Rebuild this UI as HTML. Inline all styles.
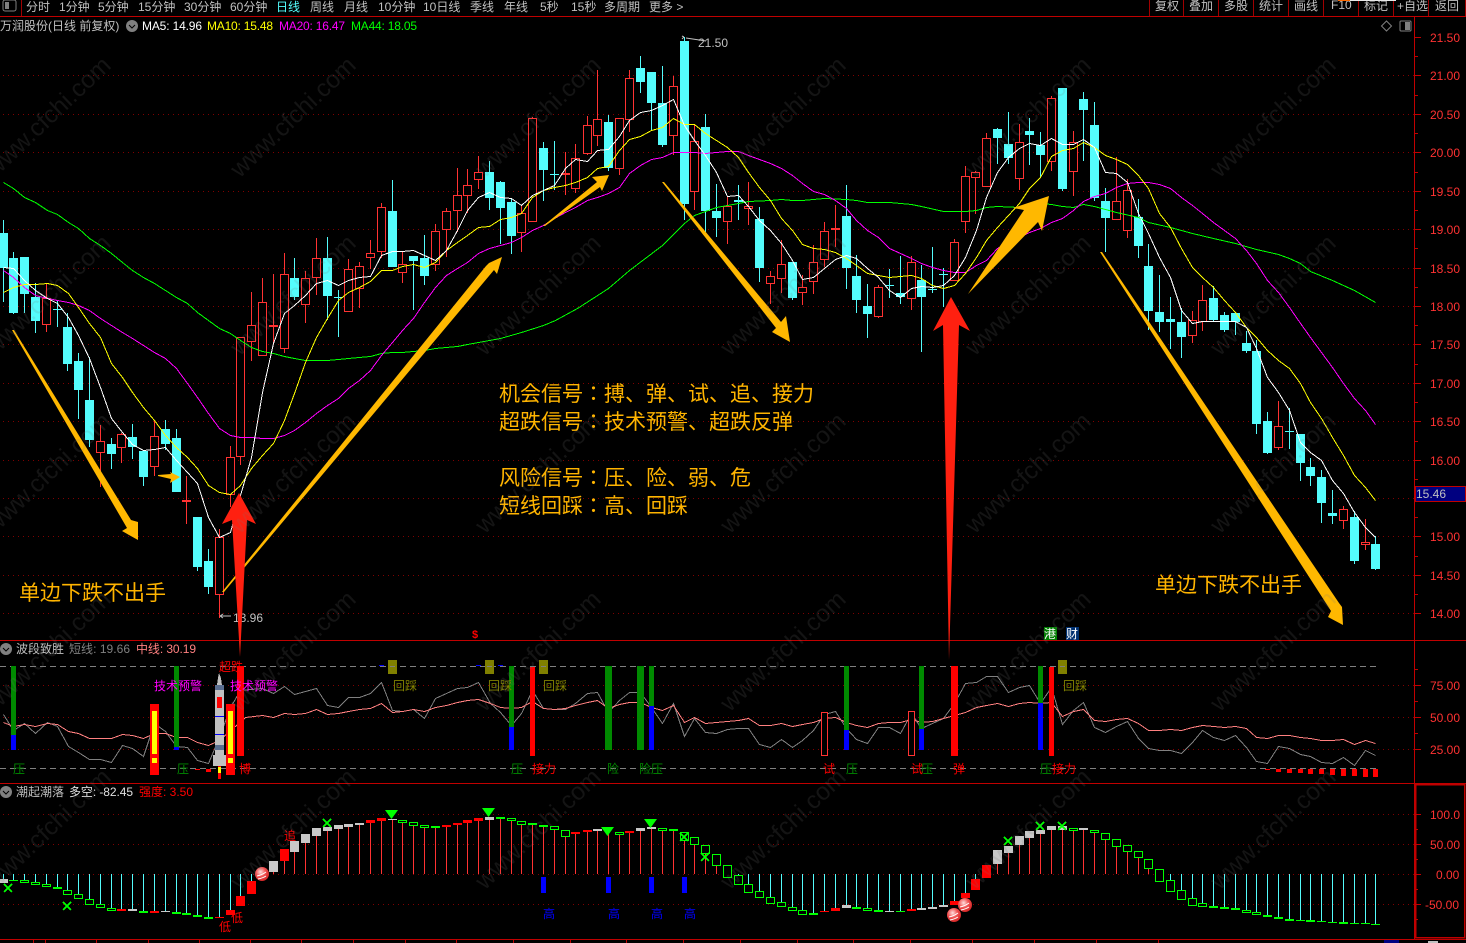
<!DOCTYPE html>
<html lang="zh">
<head>
<meta charset="utf-8">
<title>万润股份</title>
<style>
html,body{margin:0;padding:0;background:#000;width:1466px;height:943px;overflow:hidden}
svg{display:block}
text{font-family:"Liberation Sans","WenQuanYi Zen Hei","Noto Sans CJK SC",sans-serif;font-size:12px;white-space:pre}
.c{shape-rendering:crispEdges}
.big{font-size:21px;fill:#ffb400;font-family:"Liberation Sans","Noto Sans CJK JP",sans-serif}
.w{font-size:24.5px;fill:rgba(120,120,120,.17);text-anchor:middle}
.ax{fill:#ff3232}
</style>
</head>
<body>
<svg xmlns="http://www.w3.org/2000/svg" width="1466" height="943" viewBox="0 0 1466 943">
<rect width="1466" height="943" fill="#000"/>

<!-- toolbar -->
<g fill="#c0c0c0">
<rect x="3" y="0" width="13" height="11" rx="2" fill="none" stroke="#808080"/><rect x="5" y="2" width="4" height="7" fill="#808080"/>
<text x="26" y="11">分时</text><text x="59" y="11">1分钟</text><text x="98" y="11">5分钟</text><text x="138" y="11">15分钟</text><text x="184" y="11">30分钟</text><text x="230" y="11">60分钟</text><text x="276" y="11" fill="#54fcfc">日线</text><text x="310" y="11">周线</text><text x="344" y="11">月线</text><text x="378" y="11">10分钟</text><text x="423" y="11">10日线</text><text x="470" y="11">季线</text><text x="504" y="11">年线</text><text x="540" y="11">5秒</text><text x="571" y="11">15秒</text><text x="604" y="11">多周期</text><text x="649" y="11">更多 &gt;</text>
<text x="1155" y="10">复权</text><text x="1189" y="10">叠加</text><text x="1224" y="10">多股</text><text x="1259" y="10">统计</text><text x="1294" y="10">画线</text><text x="1331" y="9">F10</text><text x="1364" y="10">标记</text><text x="1397" y="10">+自选</text><text x="1435" y="10">返回</text>
</g>
<path class="c" d="M21.5 0V16M1149.5 0V16M1183.5 0V16M1218.5 0V16M1253.5 0V16M1288.5 0V16M1323.5 0V16M1358.5 0V16M1393.5 0V16M1428.5 0V16M1465.5 0V16" stroke="#a00000" fill="none"/>
<path class="c" d="M1338 .5h12" stroke="#ff6a00"/><path class="c" d="M1350 .5h46" stroke="#e8e8e8"/>

<!-- grid -->
<path class="c" d="M3 75.5H1414M3 114.5H1414M3 152.5H1414M3 191.5H1414M3 229.5H1414M3 268.5H1414M3 306.5H1414M3 344.5H1414M3 383.5H1414M3 421.5H1414M3 460.5H1414M3 498.5H1414M3 536.5H1414M3 575.5H1414M3 613.5H1414M3 685.5H1414M3 717.5H1414M3 749.5H1414M3 814.5H1414M3 844.5H1414M3 874.5H1414M3 904.5H1414" stroke="#800000" stroke-dasharray="1 4" fill="none"/>
<path class="c" d="M0 666.5H1378M0 768.5H1378" stroke="#808080" stroke-dasharray="6 4" fill="none"/>

<!-- frame lines -->
<path class="c" d="M0 16.5H1466M0 640.5H1466M0 783.5H1466M0 939.5H1466" stroke="#c00000" fill="none"/>
<path class="c" d="M1414.5 17V939" stroke="#c00000" fill="none"/>
<rect class="c" x="1415.5" y="784.5" width="49" height="153" fill="none" stroke="#c00000" stroke-width="1.5"/>
<path class="c" d="M1414 37.5h7M1414 75.5h7M1414 114.5h7M1414 152.5h7M1414 191.5h7M1414 229.5h7M1414 268.5h7M1414 306.5h7M1414 344.5h7M1414 383.5h7M1414 421.5h7M1414 460.5h7M1414 498.5h7M1414 536.5h7M1414 575.5h7M1414 613.5h7M1414 56.5h4M1414 95.5h4M1414 133.5h4M1414 172.5h4M1414 210.5h4M1414 248.5h4M1414 287.5h4M1414 325.5h4M1414 364.5h4M1414 402.5h4M1414 441.5h4M1414 479.5h4M1414 517.5h4M1414 556.5h4M1414 594.5h4M1414 685.5h7M1414 717.5h7M1414 749.5h7M1414 701.5h4M1414 733.5h4M1414 669.5h4M1414 814.5h7M1414 844.5h7M1414 874.5h7M1414 904.5h7M1414 829.5h4M1414 859.5h4M1414 889.5h4M1414 919.5h4" stroke="#c00000" fill="none"/>
<path class="c" d="M33.5 940v3M45.5 940v3M96.5 940v3M148.5 940v3M199.5 940v3M250.5 940v3M301.5 940v3M353.5 940v3M405.5 940v3M456.5 940v3M513.5 940v3M570.5 940v3M626.5 940v3M683.5 940v3M740.5 940v3M797.5 940v3M853.5 940v3M910.5 940v3M972.5 940v3M1034.5 940v3M1096.5 940v3M1158.5 940v3" stroke="#c00000" fill="none"/>
<rect x="1384" y="940" width="15" height="3" fill="#000080"/><rect x="1428" y="941" width="10" height="2" fill="#c0c0c0"/>

<!-- axis labels -->
<g class="ax">
<text x="1430" y="42">21.50</text><text x="1430" y="80">21.00</text><text x="1430" y="119">20.50</text><text x="1430" y="157">20.00</text><text x="1430" y="196">19.50</text><text x="1430" y="234">19.00</text><text x="1430" y="273">18.50</text><text x="1430" y="311">18.00</text><text x="1430" y="349">17.50</text><text x="1430" y="388">17.00</text><text x="1430" y="426">16.50</text><text x="1430" y="465">16.00</text><text x="1430" y="541">15.00</text><text x="1430" y="580">14.50</text><text x="1430" y="618">14.00</text>
<text x="1430" y="690">75.00</text><text x="1430" y="722">50.00</text><text x="1430" y="754">25.00</text>
<text x="1430" y="819">100.0</text><text x="1430" y="849">50.00</text><text x="1436" y="879">0.00</text><text x="1425" y="909">-50.00</text>
</g>
<rect class="c" x="1415.5" y="486.5" width="50" height="15" fill="#000080" stroke="#c00000"/>
<text x="1416" y="498" fill="#c0c0c0">15.46</text>

<!-- title -->
<text x="0" y="30" fill="#c0c0c0">万润股份(日线 前复权)</text>
<circle cx="132" cy="26" r="6" fill="#808080"/><path d="M129 25l3 3 3-3" stroke="#000" fill="none"/>
<text x="142" y="30" fill="#fff" textLength="60">MA5: 14.96</text>
<text x="207" y="30" fill="#ffff00" textLength="66">MA10: 15.48</text>
<text x="279" y="30" fill="#ff00ff" textLength="66">MA20: 16.47</text>
<text x="351" y="30" fill="#00ff00" textLength="66">MA44: 18.05</text>
<path d="M1386.5 21l5 5-5 5-5-5z" fill="none" stroke="#808080"/>
<rect x="1400" y="21" width="11" height="10" rx="1" fill="none" stroke="#808080"/><rect x="1405" y="22" width="5" height="8" fill="#808080"/>

<!-- candle wicks -->
<path class="c" fill="none" stroke="#54fcfc" d="M3.5 220V302M13.5 252V314M24.5 257V313M35.5 283V333M57.5 300V327M67.5 313V371M78.5 353V419M89.5 357V447M111.5 438V469M132.5 424V459M143.5 451V486M165.5 420V450M176.5 429V492M197.5 517V571M208.5 549V594M294.5 258V300M327.5 237V320M338.5 290V337M392.5 180V267M413.5 256V310M424.5 235V285M489.5 161V210M500.5 181V244M511.5 198V254M543.5 142V201M554.5 141V190M608.5 115V171M640.5 56V93M651.5 72V130M662.5 66V147M684.5 37V220M705.5 114V232M716.5 184V237M738.5 185V220M759.5 207V282M792.5 262V300M846.5 185V289M856.5 255V313M867.5 284V338M889.5 269V298M900.5 256V304M921.5 265V352M932.5 247V293M943.5 268V307M997.5 128V164M1008.5 112V164M1029.5 118V165M1040.5 132V177M1062.5 88V191M1083.5 92V161M1094.5 102V201M1105.5 188V252M1138.5 199V258M1148.5 244V330M1159.5 275V332M1170.5 297V349M1181.5 308V358M1213.5 286V322M1224.5 312V332M1235.5 313V335M1246.5 331V353M1256.5 340V434M1267.5 412V454M1289.5 408V449M1300.5 434V481M1310.5 458V486M1321.5 470V523M1332.5 490V524M1354.5 511V564M1375.5 536V570"/>
<path class="c" fill="none" stroke="#ff3232" d="M46.5 283V332M100.5 425V487M121.5 433V463M154.5 421V476M186.5 476V524M219.5 529V618M230.5 446V507M240.5 337V465M251.5 292V361M262.5 278V356M273.5 274V343M284.5 253V353M305.5 271V323M316.5 238V295M348.5 259V312M359.5 262V308M370.5 240V269M381.5 203V258M402.5 252V283M435.5 224V271M446.5 208V257M457.5 168V232M467.5 169V213M478.5 156V189M521.5 205V252M532.5 117V222M565.5 152V195M575.5 144V193M587.5 116V155M597.5 70V146M619.5 118V175M629.5 70V132M673.5 76V155M694.5 125V210M727.5 197V244M748.5 182V225M770.5 271V304M781.5 240V293M802.5 275V305M813.5 245V294M824.5 222V267M835.5 205V247M878.5 285V318M911.5 256V310M954.5 239V281M965.5 166V233M975.5 171V214M986.5 133V187M1019.5 124V190M1051.5 96V171M1073.5 131V196M1116.5 157V220M1127.5 179V238M1192.5 311V343M1202.5 285V331M1278.5 401V450M1343.5 506V529M1365.5 519V550"/>
<!-- cyan bodies -->
<path class="c" fill="#54fcfc" d="M-1 233h9V268h-9zM9 258h9V313h-9zM20 257h9V294h-9zM31 297h9V321h-9zM53 309h9v1h-9zM63 327h9V364h-9zM74 361h9V390h-9zM85 400h9V440h-9zM107 444h9V454h-9zM128 437h9V447h-9zM139 451h9V477h-9zM161 429h9V444h-9zM172 438h9V492h-9zM193 517h9V567h-9zM204 561h9V587h-9zM290 278h9V297h-9zM323 258h9V296h-9zM334 297h9v1h-9zM388 211h9V267h-9zM409 256h9V261h-9zM420 258h9V276h-9zM485 172h9V198h-9zM496 182h9V208h-9zM507 202h9V236h-9zM539 148h9V170h-9zM550 174h9v1h-9zM604 122h9V168h-9zM636 68h9V82h-9zM647 72h9V103h-9zM658 103h9V145h-9zM680 41h9V204h-9zM701 127h9V211h-9zM712 211h9V218h-9zM734 200h9v2h-9zM755 219h9V268h-9zM788 262h9V298h-9zM842 216h9V268h-9zM852 276h9V300h-9zM863 306h9V314h-9zM885 285h9v1h-9zM896 293h9V297h-9zM917 280h9V297h-9zM928 289h9v1h-9zM939 274h9v1h-9zM993 129h9V138h-9zM1004 144h9V158h-9zM1025 131h9V135h-9zM1036 145h9V155h-9zM1058 88h9V189h-9zM1079 99h9V110h-9zM1090 125h9V198h-9zM1101 201h9V218h-9zM1134 217h9V246h-9zM1144 266h9V311h-9zM1155 312h9V322h-9zM1166 319h9V322h-9zM1177 322h9V337h-9zM1209 298h9V320h-9zM1220 315h9V330h-9zM1231 313h9V322h-9zM1242 343h9V351h-9zM1252 351h9V424h-9zM1263 421h9V453h-9zM1285 431h9v1h-9zM1296 434h9V463h-9zM1306 467h9V476h-9zM1317 477h9V503h-9zM1328 513h9V516h-9zM1350 517h9V561h-9zM1371 544h9V569h-9z"/>
<!-- red bodies -->
<path class="c" fill="#000" stroke="#ff3232" d="M42.5 298.5h8V324.500h-8zM96.500 441.500h8V452.500h-8zM117.500 434.500h8V447.500h-8zM150.500 436.500h8V466.500h-8zM215.500 537.500h8V594.500h-8zM226.500 457.500h8V494.500h-8zM236.500 337.500h8V456.500h-8zM247.500 325.500h8V341.500h-8zM258.500 302.500h8V355.500h-8zM280.500 274.500h8V348.500h-8zM301.500 278.500h8V304.500h-8zM312.500 258.500h8V277.500h-8zM344.500 269.500h8V311.500h-8zM355.500 266.500h8V288.500h-8zM366.500 253.500h8V257.500h-8zM377.500 207.500h8V251.500h-8zM398.500 264.500h8V272.500h-8zM431.500 231.500h8V264.500h-8zM442.500 211.500h8V229.500h-8zM453.500 195.500h8V210.500h-8zM463.500 185.500h8V195.500h-8zM474.500 172.500h8V179.500h-8zM517.500 213.500h8V232.500h-8zM528.500 118.500h8V221.500h-8zM571.500 158.500h8V188.500h-8zM583.500 125.500h8V153.500h-8zM593.500 119.500h8V135.500h-8zM615.500 118.500h8V168.500h-8zM625.500 78.500h8V119.500h-8zM669.500 86.500h8V135.500h-8zM690.500 141.500h8V191.500h-8zM723.500 206.500h8V221.500h-8zM744.500 206.500h8V208.500h-8zM766.500 276.500h8V283.500h-8zM777.500 264.500h8V278.500h-8zM798.500 287.500h8V292.500h-8zM809.500 262.500h8V281.500h-8zM820.500 231.500h8V259.500h-8zM874.500 287.500h8V316.500h-8zM907.500 262.500h8V298.500h-8zM950.500 242.500h8V280.500h-8zM961.500 176.500h8V221.500h-8zM971.500 172.500h8V177.500h-8zM982.500 138.500h8V186.500h-8zM1015.500 142.500h8V178.500h-8zM1047.500 98.500h8V161.500h-8zM1069.500 142.500h8V171.500h-8zM1112.500 201.500h8V219.500h-8zM1123.500 190.500h8V230.500h-8zM1188.500 320.500h8V335.500h-8zM1198.500 300.500h8V321.500h-8zM1274.500 426.500h8V447.500h-8zM1339.500 509.500h8V520.500h-8zM1361.500 542.500h8V544.500h-8z"/>
<path class="c" fill="#ff3232" d="M182 500h9v2h-9zM269 325h9v2h-9zM561 173h9v2h-9zM831 228h9v2h-9z"/>

<!-- moving averages -->
<g fill="none" stroke-width="1" class="c" transform="translate(.5 .5)">
<polyline stroke="#00ff00" points="3,182 13,188 24,197 35,202 47,210 57,214 68,222 78,228 89,238 100,245 111,253 122,262 132,270 143,277 154,283 165,290 176,297 187,303 197,312 208,320 219,328 230,333 240,340 251,347 262,351 273,353 284,356 294,358 305,360 316,360 327,360 338,359 348,358 359,357 370,356 381,353 392,352 402,352 413,351 424,350 435,348 446,347 457,346 467,344 478,342 489,340 500,338 521,332 543,325 555,320 577,308 608,288 629,270 662,245 684,223 694,215 705,211 716,207 727,205 738,203 748,201 770,200 781,199 792,200 802,200 813,199 824,198 846,199 856,200 867,202 889,202 911,204 921,206 943,211 965,211 976,210 986,207 997,206 1019,207 1040,203 1051,204 1062,206 1073,207 1083,204 1094,206 1105,209 1116,212 1138,217 1148,222 1170,227 1192,233 1213,238 1235,243 1256,249 1278,254 1289,258 1300,263 1310,271 1332,280 1354,290 1375,302"/>
<polyline stroke="#ff00ff" points="3,270 13,277 24,287 35,295 47,298 57,300 68,302 78,305 89,310 100,318 111,325 122,332 132,338 143,345 154,352 165,358 176,368 187,383 197,397 208,413 219,428 230,435 240,437 251,437 262,438 273,438 284,435 294,430 305,422 316,413 327,405 338,398 348,388 359,380 370,370 381,355 392,342 402,330 413,318 424,302 435,287 446,275 457,268 467,262 478,253 489,248 500,245 511,242 521,237 532,230 543,225 554,218 565,212 575,207 587,200 597,197 608,193 619,187 629,173 640,165 651,159 662,157 673,152 684,152 694,152 705,153 716,152 727,151 738,151 748,155 759,159 770,163 781,168 792,175 802,183 813,191 824,194 835,200 846,208 856,220 867,230 878,237 889,248 900,253 911,258 921,263 932,267 943,270 954,272 965,272 976,265 986,260 997,248 1008,242 1019,237 1029,232 1040,228 1051,222 1062,218 1073,210 1083,201 1094,196 1105,193 1116,187 1127,183 1138,182 1148,182 1159,184 1170,188 1181,197 1192,205 1202,213 1213,222 1224,230 1235,238 1246,250 1256,263 1267,280 1278,292 1289,307 1298,320 1310,337 1321,352 1332,367 1343,383 1354,398 1365,410 1375,424"/>
<polyline stroke="#ffff00" points="3,292 13,287 24,284 35,284 47,283 57,285 68,293 78,307 89,323 100,337 111,363 122,377 132,392 143,407 154,420 165,435 176,447 187,457 197,468 208,485 219,492 230,494 240,485 251,468 262,455 273,443 284,420 294,393 305,362 316,337 327,318 338,300 348,292 359,287 370,281 381,270 392,270 402,266 413,264 424,267 435,262 446,250 457,242 467,235 478,227 489,226 500,219 511,217 521,213 532,197 543,190 554,187 565,185 575,182 587,177 597,168 608,166 619,150 629,139 640,136 651,130 662,127 673,118 684,124 694,124 705,133 716,140 727,147 738,157 748,172 759,187 770,200 781,218 792,230 802,244 813,248 824,249 835,252 846,258 856,265 867,273 878,275 889,277 900,276 911,275 921,278 932,285 943,288 954,285 965,273 976,257 986,240 997,227 1008,215 1019,203 1029,188 1040,177 1051,156 1062,150 1073,148 1083,142 1094,147 1105,155 1116,159 1127,164 1138,175 1148,188 1159,213 1170,227 1181,248 1192,267 1202,277 1213,287 1224,300 1235,312 1246,327 1256,337 1267,350 1278,360 1289,368 1300,383 1310,402 1321,418 1332,437 1343,455 1354,475 1365,487 1375,500"/>
<polyline stroke="#ffffff" points="3,267 13,268 24,280 35,290 47,298 57,303 68,317 78,335 89,358 100,387 111,418 122,432 132,444 143,450 154,449 165,447 176,460 187,472 197,483 208,517 219,537 230,532 240,495 251,457 262,392 273,343 284,313 294,305 305,295 316,283 327,280 338,285 348,280 359,277 370,276 381,255 392,251 402,251 413,250 424,255 435,260 446,250 457,230 467,210 478,197 489,192 500,197 511,198 521,205 532,195 543,190 554,185 565,168 575,159 587,161 597,150 608,149 619,136 629,120 640,112 651,110 662,105 673,99 684,125 694,140 705,155 716,172 727,196 738,195 748,206 759,220 770,230 781,243 792,260 802,279 813,277 824,268 835,259 846,255 856,258 867,268 878,277 889,290 900,297 911,288 921,286 932,287 943,285 954,275 965,257 976,230 986,197 997,172 1008,157 1019,148 1029,143 1040,145 1051,138 1062,144 1073,144 1083,139 1094,147 1105,172 1116,173 1127,182 1138,213 1148,233 1159,257 1170,277 1181,310 1192,323 1202,321 1213,321 1224,321 1235,321 1246,327 1256,348 1267,377 1278,392 1289,410 1300,442 1310,452 1321,460 1332,480 1343,493 1354,512 1365,527 1375,537"/>
</g>

<!-- hi/lo labels -->
<path d="M684 38l-2 2m2-2l-2-1M686 39l20 3" stroke="#c0c0c0" fill="none" transform="translate(0,-1)"/>
<text x="698" y="47" fill="#c0c0c0">21.50</text>
<path d="M220 616h11M220 616l3-2M220 616l3 2" stroke="#c0c0c0" fill="none"/>
<text x="233" y="622" fill="#c0c0c0">13.96</text>

<!-- orange arrows -->
<g fill="#ffb800">
<polygon points="12,330 14,330 131,520 138,522 138,540 122,531 127,528"/>
<polygon points="222,592 486,266 489,263 502,257 497,274 494,270 224,592"/>
<polygon points="543,226 597,182 592,177 609,175 602,191 600,187 545,226"/>
<polygon points="662,182 664,182 781,322 786,316 790,342 772,332 776,328"/>
<polygon points="968,294 1024,210 1013,208 1049,196 1042,231 1038,222"/>
<polygon points="1100,252 1102,252 1339,603 1342,607 1343,625 1328,617 1331,611"/>
<polygon points="158,475 171,474 170,472 180,477 170,483 171,479 158,476"/>
</g>
<!-- red arrows -->
<g fill="#ff2010">
<polygon points="239,493 256,524 247,520 240,657 232,520 222,524"/>
<polygon points="951,297 970,331 959,325 949,660 943,325 933,331"/>
</g>

<!-- annotations -->
<text class="big" lang="ja" x="499" y="401">机会信号：搏、弹、试、追、接力</text>
<text class="big" lang="ja" x="499" y="429">超跌信号：技术预警、超跌反弹</text>
<text class="big" lang="ja" x="499" y="485">风险信号：压、险、弱、危</text>
<text class="big" lang="ja" x="499" y="513">短线回踩：高、回踩</text>
<text class="big" x="19" y="600">单边下跌不出手</text>
<text class="big" x="1155" y="592">单边下跌不出手</text>
<text x="472" y="638" fill="#ff0000" style="font-size:11px;font-weight:bold">$</text>
<rect x="1044" y="627" width="13" height="13" fill="#008000"/><text x="1044" y="638" fill="#fff">港</text>
<rect x="1066" y="627" width="13" height="13" fill="#003070"/><text x="1066" y="638" fill="#fff">财</text>

<!-- pane 2 title -->
<circle cx="6" cy="649" r="6" fill="#808080"/><path d="M3 648l3 3 3-3" stroke="#000" fill="none"/>
<text x="16" y="653" fill="#c0c0c0">波段致胜</text>
<text x="69" y="653" fill="#808080" textLength="61">短线: 19.66</text>
<text x="136" y="653" fill="#ff8080" textLength="60">中线: 30.19</text>

<!-- pane 2 lines -->
<g fill="none" class="c" transform="translate(.5 .5)">
<polyline stroke="#808080" points="3,714 13,730 24,723 35,733 47,722 57,726 68,746 78,752 89,759 100,759 111,762 122,745 132,748 143,756 154,723 165,731 176,746 187,747 197,760 208,763 219,737 230,707 240,690 262,688 273,693 284,686 294,694 305,691 316,688 327,705 338,707 348,697 359,697 370,693 381,682 392,710 402,711 413,709 424,718 435,698 446,693 457,688 467,687 478,682 490,703 500,712 511,725 521,713 532,690 543,708 554,709 565,709 575,703 587,693 597,692 608,712 619,700 629,692 640,692 651,707 662,723 673,703 684,736 694,718 705,732 716,733 727,729 738,728 748,728 759,744 770,747 781,739 792,747 802,740 813,730 824,714 835,711 846,728 856,739 867,743 878,727 889,727 900,733 911,713 921,728 932,723 943,718 954,703 965,683 976,682 986,676 997,676 1008,692 1019,687 1029,685 1040,703 1051,687 1062,724 1073,710 1083,702 1094,727 1105,732 1116,726 1127,721 1138,738 1148,748 1159,750 1170,750 1181,753 1192,742 1202,730 1213,737 1224,740 1235,735 1246,747 1256,761 1267,763 1278,746 1289,748 1300,754 1310,756 1321,762 1332,763 1343,757 1354,765 1365,750 1375,755"/>
<polyline stroke="#ff8080" points="3,722 13,726 24,724 35,726 47,723 57,724 68,731 78,733 89,738 100,738 111,738 122,734 132,735 143,738 154,733 165,733 176,737 187,737 197,742 208,745 219,740 245,717 262,715 273,717 284,713 294,714 305,713 316,709 327,714 338,713 348,711 359,709 370,708 381,703 392,712 402,711 413,709 424,711 435,707 446,705 457,702 467,700 478,699 490,703 500,707 511,708 521,707 532,701 543,708 554,709 565,708 575,705 587,702 597,700 608,708 619,704 629,702 640,702 651,707 662,710 673,705 684,722 694,717 705,723 716,722 727,721 738,720 748,718 759,725 770,725 781,723 792,726 802,724 813,722 824,718 835,717 846,722 856,725 867,727 878,723 889,722 900,722 911,719 921,722 932,721 943,718 954,715 965,712 976,707 986,705 997,703 1008,706 1019,703 1029,702 1040,703 1051,702 1062,716 1073,711 1083,709 1094,720 1105,721 1116,719 1127,718 1138,723 1148,730 1159,730 1170,729 1181,730 1192,727 1202,725 1213,726 1224,727 1235,726 1246,728 1256,737 1267,738 1278,735 1289,735 1300,737 1310,738 1321,740 1332,740 1343,739 1354,744 1365,740 1375,743"/>
</g>

<!-- pane 2 bars -->
<path class="c" fill="#008a00" d="M11 666h5v69h-5zM174 666h5v81h-5zM509 666h5v61h-5zM605 666h7v84h-7zM637 666h7v84h-7zM649 666h5v40h-5zM844 666h5v64h-5zM919 666h5v63h-5zM1038 666h5v37h-5z"/>
<path class="c" fill="#0000ff" d="M11 735h5v15h-5zM174 747h5v3h-5zM509 727h5v23h-5zM649 706h5v44h-5zM844 730h5v20h-5zM919 729h5v21h-5zM1038 703h5v47h-5zM379 665h5v1h-5zM476 665h5v1h-5zM498 665h5v1h-5z"/>
<path class="c" fill="#ff0000" d="M237 666h7v90h-7zM530 667h5v89h-5zM951 666h7v90h-7zM1049 667h5v89h-5zM150 704h9v71h-9zM226 704h9v71h-9zM195 769h5v1h-5zM206 769h5v3h-5zM1265 769h5v1h-5zM1276 769h5v3h-5zM1287 769h5v4h-5zM1298 769h5v4h-5zM1308 769h5v5h-5zM1319 769h5v5h-5zM1330 769h5v6h-5zM1341 769h5v7h-5zM1352 769h5v7h-5zM1363 769h5v8h-5zM1373 769h5v8h-5z"/>
<path class="c" fill="#ffff00" d="M152 711h5v43h-5zM152 758h5v5h-5zM228 711h5v43h-5zM228 758h5v5h-5z"/>
<path class="c" fill="#000" stroke="#ff3232" d="M821.500 712.500h6V755.500h-6zM908.500 711.500h6V755.500h-6z"/>
<path class="c" fill="#808000" d="M388 660h9v14h-9zM485 660h9v14h-9zM539 660h9v14h-9zM1058 660h9v14h-9z"/>
<path class="c" stroke="#808080" d="M390 666.500h5M487 666.500h5M541 666.500h5M1060 666.500h5"/>
<!-- rocket -->
<g class="c">
<polygon points="219,673 221,678 222,685 217,685 218,678" fill="#c0c0c0"/>
<rect x="215" y="685" width="9" height="70" fill="#c0c0c0"/>
<rect x="213" y="755" width="13" height="11" fill="#c0c0c0"/>
<rect x="215" y="685" width="9" height="5" fill="#5a6e90"/>
<rect x="215" y="745" width="9" height="5" fill="#5a6e90"/>
<rect x="217" y="697" width="5" height="11" fill="#ff0000"/>
<rect x="215" y="716" width="9" height="1" fill="#0000ff"/>
<rect x="215" y="734" width="9" height="1" fill="#0000ff"/>
<rect x="218" y="766" width="3" height="13" fill="#ff0000"/>
<rect x="218" y="767" width="3" height="6" fill="#ffff00"/>
</g>

<!-- pane 2 labels -->
<g fill="#008a00">
<text x="13" y="773">压</text><text x="177" y="773">压</text><text x="511" y="773">压</text><text x="607" y="773">险</text><text x="639" y="773">险压</text><text x="846" y="773">压</text><text x="921" y="773">压</text><text x="1040" y="773">压</text>
</g>
<g fill="#ff0000">
<text x="239" y="773">博</text><text x="532" y="773">接力</text><text x="823" y="773">试</text><text x="911" y="773">试</text><text x="953" y="773">弹</text><text x="1052" y="773">接力</text><text x="219" y="671">超跌</text>
</g>
<g fill="#ff00ff"><text x="154" y="690">技术预警</text><text x="230" y="690">技术预警</text></g>
<g fill="#808000"><text x="393" y="690">回踩</text><text x="488" y="690">回踩</text><text x="543" y="690">回踩</text><text x="1063" y="690">回踩</text></g>

<!-- pane 3 title -->
<circle cx="6" cy="792" r="6" fill="#808080"/><path d="M3 791l3 3 3-3" stroke="#000" fill="none"/>
<text x="16" y="796" fill="#c0c0c0">潮起潮落</text>
<text x="69" y="796" fill="#e0e0e0" textLength="64">多空: -82.45</text>
<text x="139" y="796" fill="#ff0000" textLength="54">强度: 3.50</text>

<!-- pane 3 stems -->
<path class="c" fill="none" stroke="#54fcfc" d="M3.500 874V879M13.500 874V880M24.500 874V880M35.500 874V882M46.500 874V884M57.500 874V887M67.500 874V890M78.500 874V894M89.500 874V899M100.500 874V904M111.500 874V908M121.500 874V909M132.500 874V909M143.500 874V911M154.500 874V911M165.500 874V911M176.500 874V912M186.500 874V913M197.500 874V915M208.500 874V917M219.500 874V917M230.500 874V910M240.500 874V896M251.500 874V881M738.500 874V875M748.500 874V884M759.500 874V891M770.500 874V897M781.500 874V902M792.500 874V907M802.500 874V910M813.500 874V913M824.500 874V911M835.500 874V908M846.500 874V905M856.500 874V907M867.500 874V908M878.500 874V910M889.500 874V911M900.500 874V911M911.500 874V909M921.500 874V908M932.500 874V907M943.500 874V905M954.500 874V901M965.500 874V893M975.500 874V879M986.500 874V878M1170.500 874V880M1181.500 874V890M1192.500 874V898M1202.500 874V903M1213.500 874V906M1224.500 874V907M1235.500 874V908M1246.500 874V910M1256.500 874V912M1267.500 874V915M1278.500 874V917M1289.500 874V919M1300.500 874V920M1310.500 874V920M1321.500 874V921M1332.500 874V922M1343.500 874V922M1354.500 874V923M1365.500 874V923M1375.500 874V924"/>
<path class="c" fill="none" stroke="#ff3232" d="M262.500 874V868M273.500 874V872M284.500 874V861M294.500 874V852M305.500 874V843M316.500 874V836M327.500 874V831M338.500 874V829M348.500 874V827M359.500 874V825M370.500 874V823M381.500 874V821M392.500 874V820M402.500 874V823M413.500 874V826M424.500 874V828M435.500 874V828M446.500 874V827M457.500 874V825M467.500 874V823M478.500 874V821M489.500 874V820M500.500 874V819M511.500 874V821M521.500 874V825M532.500 874V825M543.500 874V827M554.500 874V830M565.500 874V837M575.500 874V834M587.500 874V832M597.500 874V831M608.500 874V832M619.500 874V835M629.500 874V833M640.500 874V831M651.500 874V829M662.500 874V831M673.500 874V831M684.500 874V841M694.500 874V845M705.500 874V854M716.500 874V866M997.500 874V864M1008.500 874V853M1019.500 874V845M1029.500 874V838M1040.500 874V834M1051.500 874V830M1062.500 874V830M1073.500 874V831M1083.500 874V830M1094.500 874V833M1105.500 874V840M1116.500 874V847M1127.500 874V852M1138.500 874V858M1148.500 874V869"/>

<!-- pane 3 hollow boxes -->
<path class="c" fill="#000" stroke="#00ff00" d="M20.500 880.500h8V882.500h-8zM31.500 882.500h8V884.500h-8zM42.500 884.500h8V886.500h-8zM53.500 887.500h8V888.500h-8zM63.500 890.500h8V894.500h-8zM74.500 894.500h8V898.500h-8zM85.500 899.500h8V904.500h-8zM96.500 904.500h8V907.500h-8zM107.500 908.500h8V910.500h-8zM182.500 913.500h8V914.500h-8zM193.500 915.500h8V916.500h-8zM204.500 917.500h8V918.500h-8zM398.500 820.500h8V822.500h-8zM409.500 822.500h8V825.500h-8zM420.500 825.500h8V827.500h-8zM507.500 818.500h8V820.500h-8zM517.500 821.500h8V824.500h-8zM550.500 826.500h8V829.500h-8zM561.500 830.500h8V836.500h-8zM615.500 832.500h8V834.500h-8zM658.500 828.500h8V830.500h-8zM680.500 832.500h8V840.500h-8zM690.500 837.500h8V844.500h-8zM701.500 845.500h8V853.500h-8zM712.500 854.500h8V865.500h-8zM723.500 865.500h8V877.500h-8zM734.500 875.500h8V884.500h-8zM744.500 884.500h8V892.500h-8zM755.500 891.500h8V897.500h-8zM766.500 897.500h8V903.500h-8zM777.500 902.500h8V906.500h-8zM788.500 907.500h8V910.500h-8zM798.500 910.500h8V914.500h-8zM863.500 908.500h8V910.500h-8zM1069.500 828.500h8V830.500h-8zM1090.500 830.500h8V832.500h-8zM1101.500 833.500h8V839.500h-8zM1112.500 839.500h8V846.500h-8zM1123.500 845.500h8V851.500h-8zM1134.500 851.500h8V857.500h-8zM1144.500 859.500h8V868.500h-8zM1155.500 869.500h8V881.500h-8zM1166.500 880.500h8V891.500h-8zM1177.500 890.500h8V899.500h-8zM1188.500 898.500h8V905.500h-8zM1198.500 903.500h8V906.500h-8zM1220.500 907.500h8V908.500h-8zM1242.500 910.500h8V912.500h-8zM1252.500 912.500h8V914.500h-8zM1263.500 915.500h8V916.500h-8zM1274.500 917.500h8V918.500h-8z"/>
<!-- pane 3 green thin -->
<path class="c" fill="#00ff00" d="M9 880h9v1h-9zM139 911h9v2h-9zM172 912h9v2h-9zM431 826h9v2h-9zM496 817h9v2h-9zM528 823h9v2h-9zM539 825h9v2h-9zM669 829h9v2h-9zM809 913h9v2h-9zM852 907h9v2h-9zM874 910h9v2h-9zM896 911h9v1h-9zM1209 906h9v2h-9zM1231 908h9v2h-9zM1285 919h9v2h-9zM1296 920h9v1h-9zM1306 920h9v2h-9zM1317 921h9v1h-9zM1328 922h9v1h-9zM1339 922h9v2h-9zM1350 923h9v1h-9zM1361 923h9v1h-9zM1371 924h9v1h-9z"/>
<!-- pane 3 red fill -->
<path class="c" fill="#ff0000" d="M117 909h9v2h-9zM150 911h9v2h-9zM215 917h9v1h-9zM226 910h9v5h-9zM236 896h9v10h-9zM247 881h9v13h-9zM280 849h9v12h-9zM366 820h9v3h-9zM377 818h9v3h-9zM442 825h9v2h-9zM453 823h9v2h-9zM463 820h9v3h-9zM474 818h9v3h-9zM571 832h9v2h-9zM583 830h9v2h-9zM625 831h9v2h-9zM820 911h9v1h-9zM831 908h9v3h-9zM907 909h9v2h-9zM950 901h9v4h-9zM961 893h9v5h-9zM971 879h9v11h-9zM982 865h9v13h-9z"/>
<!-- pane 3 gray fill -->
<path class="c" fill="#c8c8c8" d="M-1 879h9v4h-9zM128 909h9v2h-9zM161 911h9v1h-9zM269 861h9v11h-9zM290 841h9v11h-9zM301 834h9v9h-9zM312 828h9v8h-9zM323 827h9v4h-9zM334 825h9v4h-9zM344 824h9v3h-9zM355 823h9v2h-9zM388 819h9v1h-9zM485 817h9v3h-9zM593 829h9v2h-9zM636 828h9v3h-9zM647 827h9v2h-9zM842 905h9v3h-9zM885 911h9v1h-9zM917 908h9v2h-9zM928 907h9v2h-9zM939 905h9v2h-9zM993 850h9v14h-9zM1004 846h9v7h-9zM1015 836h9v9h-9zM1025 831h9v7h-9zM1036 830h9v4h-9zM1047 826h9v4h-9zM1058 826h9v4h-9zM1079 828h9v2h-9z"/>

<!-- triangles -->
<g fill="#00ff00">
<polygon points="385,810 398,810 391.500,819"/>
<polygon points="482,808 495,808 488.500,817"/>
<polygon points="601,827 614,827 607.500,836"/>
<polygon points="644,819 657,819 650.500,828"/>
</g>
<!-- X marks -->
<path class="c" fill="none" stroke="#00ff00" stroke-width="2" d="M4 884l8 8m0-8l-8 8M63 902l8 8m0-8l-8 8M323 819l8 8m0-8l-8 8M680 833l8 8m0-8l-8 8M701 853l8 8m0-8l-8 8M1004 837l8 8m0-8l-8 8M1036 822l8 8m0-8l-8 8M1058 822l8 8m0-8l-8 8"/>
<!-- balls -->
<defs>
<radialGradient id="b" cx="40%" cy="35%" r="70%"><stop offset="0" stop-color="#ffe0e0"/><stop offset=".5" stop-color="#f05050"/><stop offset="1" stop-color="#d02020"/></radialGradient>
</defs>
<g>
<circle cx="262" cy="874" r="7" fill="url(#b)"/><path d="M257 876q5-1 9-4M258 879q5-1 8-3" stroke="#fff" fill="none"/>
<circle cx="954" cy="915" r="7" fill="url(#b)"/><path d="M949 917q5-1 9-4M950 920q5-1 8-3" stroke="#fff" fill="none"/>
<circle cx="965" cy="905" r="7" fill="url(#b)"/><path d="M960 907q5-1 9-4M961 910q5-1 8-3" stroke="#fff" fill="none"/>
</g>
<!-- blue bars and labels -->
<path class="c" fill="#0000ff" d="M541 877h5v16h-5zM606 877h5v16h-5zM649 877h5v16h-5zM682 877h5v16h-5z"/>
<g fill="#0000ff"><text x="543" y="918">高</text><text x="608" y="918">高</text><text x="651" y="918">高</text><text x="684" y="918">高</text></g>
<g fill="#ff0000"><text x="284" y="840">追</text><text x="219" y="931">低</text><text x="231" y="922">低</text></g>

<!-- watermark -->
<g transform="translate(-3 0)">
<text class="w" transform="rotate(-43.5 51 117)" x="51" y="125">www.cfchi.com</text>
<text class="w" transform="rotate(-43.5 296 117)" x="296" y="125">www.cfchi.com</text>
<text class="w" transform="rotate(-43.5 541 117)" x="541" y="125">www.cfchi.com</text>
<text class="w" transform="rotate(-43.5 786 117)" x="786" y="125">www.cfchi.com</text>
<text class="w" transform="rotate(-43.5 1031 117)" x="1031" y="125">www.cfchi.com</text>
<text class="w" transform="rotate(-43.5 1276 117)" x="1276" y="125">www.cfchi.com</text>
<text class="w" transform="rotate(-43.5 51 295)" x="51" y="303">www.cfchi.com</text>
<text class="w" transform="rotate(-43.5 296 295)" x="296" y="303">www.cfchi.com</text>
<text class="w" transform="rotate(-43.5 541 295)" x="541" y="303">www.cfchi.com</text>
<text class="w" transform="rotate(-43.5 786 295)" x="786" y="303">www.cfchi.com</text>
<text class="w" transform="rotate(-43.5 1031 295)" x="1031" y="303">www.cfchi.com</text>
<text class="w" transform="rotate(-43.5 1276 295)" x="1276" y="303">www.cfchi.com</text>
<text class="w" transform="rotate(-43.5 51 473)" x="51" y="481">www.cfchi.com</text>
<text class="w" transform="rotate(-43.5 296 473)" x="296" y="481">www.cfchi.com</text>
<text class="w" transform="rotate(-43.5 541 473)" x="541" y="481">www.cfchi.com</text>
<text class="w" transform="rotate(-43.5 786 473)" x="786" y="481">www.cfchi.com</text>
<text class="w" transform="rotate(-43.5 1031 473)" x="1031" y="481">www.cfchi.com</text>
<text class="w" transform="rotate(-43.5 1276 473)" x="1276" y="481">www.cfchi.com</text>
<text class="w" transform="rotate(-43.5 51 651)" x="51" y="659">www.cfchi.com</text>
<text class="w" transform="rotate(-43.5 296 651)" x="296" y="659">www.cfchi.com</text>
<text class="w" transform="rotate(-43.5 541 651)" x="541" y="659">www.cfchi.com</text>
<text class="w" transform="rotate(-43.5 786 651)" x="786" y="659">www.cfchi.com</text>
<text class="w" transform="rotate(-43.5 1031 651)" x="1031" y="659">www.cfchi.com</text>
<text class="w" transform="rotate(-43.5 1276 651)" x="1276" y="659">www.cfchi.com</text>
<text class="w" transform="rotate(-43.5 51 829)" x="51" y="837">www.cfchi.com</text>
<text class="w" transform="rotate(-43.5 296 829)" x="296" y="837">www.cfchi.com</text>
<text class="w" transform="rotate(-43.5 541 829)" x="541" y="837">www.cfchi.com</text>
<text class="w" transform="rotate(-43.5 786 829)" x="786" y="837">www.cfchi.com</text>
<text class="w" transform="rotate(-43.5 1031 829)" x="1031" y="837">www.cfchi.com</text>
<text class="w" transform="rotate(-43.5 1276 829)" x="1276" y="837">www.cfchi.com</text>
</g>
</svg>
</body>
</html>
